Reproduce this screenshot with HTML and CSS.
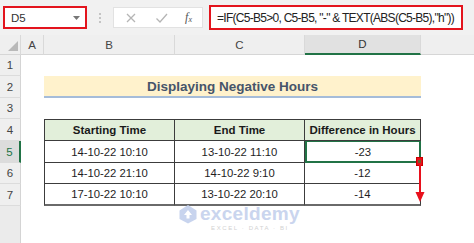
FILE: index.html
```html
<!DOCTYPE html>
<html>
<head>
<meta charset="utf-8">
<link rel="stylesheet" href="styles.css">
</head>
<body>
<div class="app">
  <div class="toolbar">
    <div class="namebox">
      <span class="nb-text">D5</span>
      <svg class="caret" width="7" height="4" viewBox="0 0 7 4"><path d="M0 0h7L3.5 4z" fill="#777"/></svg>
    </div>
    <div class="sep"><i></i><i></i><i></i></div>
    <div class="fxbtns">
      <svg width="12" height="12" viewBox="0 0 12 12"><path d="M2 2l8 8M10 2l-8 8" stroke="#b5b5b5" stroke-width="1.3" fill="none"/></svg>
      <svg width="13" height="12" viewBox="0 0 13 12"><path d="M1.5 6.5l3.5 3.5 7-8" stroke="#b5b5b5" stroke-width="1.3" fill="none"/></svg>
      <span class="fx">f<sub>x</sub></span>
    </div>
    <div class="formula">=IF(C5-B5&gt;0, C5-B5, "-" &amp; TEXT(ABS(C5-B5),"h"))</div>
  </div>

  <div class="sheet">
    <div class="colhead corner"><svg width="10" height="10" viewBox="0 0 10 10"><path d="M10 0V10H0z" fill="#b9b9b9"/></svg></div>
    <div class="colhead">A</div>
    <div class="colhead">B</div>
    <div class="colhead">C</div>
    <div class="colhead sel">D</div>
    <div class="colhead last"></div>

    <div class="rowhead r1">1</div>
    <div class="rowhead r2">2</div>
    <div class="rowhead r3">3</div>
    <div class="rowhead r4">4</div>
    <div class="rowhead r5 sel">5</div>
    <div class="rowhead r6">6</div>
    <div class="rowhead r7">7</div>
    <div class="rowhead r8"></div>

    <div class="title">Displaying Negative Hours</div>

    <div class="cell th r4 cb first">Starting Time</div>
    <div class="cell th r4 cc">End Time</div>
    <div class="cell th r4 cd">Difference in Hours</div>

    <div class="cell r5 cb first">14-10-22 10:10</div>
    <div class="cell r5 cc">13-10-22 11:10</div>
    <div class="cell r5 cd active">-23
      <span class="handle"></span>
      <span class="arrow"><svg width="10" height="38" viewBox="0 0 10 38"><path d="M5 0V30" stroke="#e8101c" stroke-width="2"/><path d="M0.5 27H9.5L5 37z" fill="#e8101c"/></svg></span>
    </div>

    <div class="cell r6 cb first">14-10-22 21:10</div>
    <div class="cell r6 cc">14-10-22 9:10</div>
    <div class="cell r6 cd">-12</div>

    <div class="cell r7 cb first lastrow">17-10-22 10:10</div>
    <div class="cell r7 cc lastrow">13-10-22 20:10</div>
    <div class="cell r7 cd lastrow">-14</div>

    <div class="watermark">
      <svg width="20" height="20" viewBox="0 0 20 20"><path d="M10 1L18.5 6.5V15L10 19.5L1.5 15V6.5z" fill="#c8d4ee"/><path d="M10 6L14 11H11.5V14.5H8.5V11H6z" fill="#ffffff"/></svg>
      <div class="wm-text">
        <span class="wm-name">exceldemy</span>
        <span class="wm-sub">EXCEL · DATA · BI</span>
      </div>
    </div>
  </div>
</div>
</body>
</html>
```
FILE: styles.css
```css
* { box-sizing: border-box; }
html, body { margin: 0; padding: 0; }
body {
  width: 474px;
  height: 243px;
  overflow: hidden;
  background: #ffffff;
  font-family: "Liberation Sans", Arial, sans-serif;
  color: #222;
}
.app { width: 474px; height: 243px; display: flex; flex-direction: column; }

.toolbar {
  height: 35px;
  flex: none;
  background: #f1f1f1;
  display: flex;
  align-items: center;
  padding-left: 3px;
}
.namebox {
  width: 84px;
  height: 23px;
  border: 2px solid #e3141d;
  background: #fff;
  display: flex;
  align-items: center;
  justify-content: space-between;
  padding: 0 5px 0 6px;
  font-size: 11.5px;
  color: #333;
}
.caret { margin-top: 1px; }
.sep {
  width: 26px;
  display: flex;
  flex-direction: column;
  align-items: center;
  gap: 2px;
}
.sep i { width: 2px; height: 2px; background: #c4c4c4; display: block; }
.fxbtns {
  width: 90px;
  height: 21px;
  background: #fff;
  border: 1px solid #e2e2e2;
  display: flex;
  align-items: center;
  justify-content: space-between;
  padding: 0 10px 0 11px;
}
.fx {
  font-family: "Liberation Serif", serif;
  font-style: italic;
  font-size: 12px;
  color: #555;
}
.fx sub { font-size: 8px; vertical-align: -1px; }
.formula {
  margin-left: 6px;
  width: 254px;
  height: 25px;
  border: 2px solid #e3141d;
  background: #fff;
  display: flex;
  align-items: center;
  padding-left: 6px;
  font-size: 12px;
  letter-spacing: -0.72px;
  color: #222;
  white-space: nowrap;
  overflow: hidden;
}

.sheet {
  position: relative;
  flex: 1;
  display: grid;
  grid-template-columns: 21px 23px 131px 130px 116px 1fr;
  grid-template-rows: 20px 21px 22px 21px 22px 22px 21px 22px 1fr;
}
.colhead {
  grid-row: 1;
  background: #efefef;
  border-bottom: 1px solid #d6d6d6;
  border-right: 1px solid #d9d9d9;
  display: flex;
  align-items: center;
  justify-content: center;
  font-size: 11.5px;
  color: #444;
}
.colhead.corner { justify-content: flex-end; align-items: flex-end; padding: 0 2px 3px 0; }
.colhead.sel { background: #e1e1e1; border-bottom: 2px solid #217346; color: #333; }
.colhead.last { border-right: none; }

.rowhead {
  grid-column: 1;
  background: #efefef;
  border-right: 1px solid #d4d4d4;
  border-bottom: 1px solid #dcdcdc;
  display: flex;
  align-items: center;
  justify-content: center;
  font-size: 11.5px;
  color: #444;
}
.rowhead.sel { background: #dcdcdc; border-right: 2px solid #217346; color: #217346; }
.rowhead.r8 { background: #ebebeb; border-bottom: none; }

.r1 { grid-row: 2; }
.r2 { grid-row: 3; }
.r3 { grid-row: 4; }
.r4 { grid-row: 5; }
.r5 { grid-row: 6; }
.r6 { grid-row: 7; }
.r7 { grid-row: 8; }
.r8 { grid-row: 9; }

.title {
  grid-row: 3;
  grid-column: 3 / 6;
  height: 22px;
  background: #fff2cc;
  border-bottom: 2px solid #a5bcd9;
  display: flex;
  align-items: center;
  justify-content: center;
  font-weight: bold;
  font-size: 13.5px;
  color: #46546a;
}

.cb { grid-column: 3; }
.cc { grid-column: 4; }
.cd { grid-column: 5; }

.cell {
  display: flex;
  align-items: center;
  justify-content: center;
  font-size: 11.3px;
  color: #1e1e1e;
  border-right: 1px solid #3c3c3c;
  border-bottom: 1px solid #3c3c3c;
}
.cell.first { border-left: 1px solid #3c3c3c; }
.cell.th {
  background: #e2efda;
  border-top: 1px solid #3c3c3c;
  font-weight: bold;
  font-size: 11.5px;
  color: #1a1a1a;
}
.cell.lastrow { border-bottom: 2px solid #6a6a6a; }
.cell.active {
  position: relative;
  box-shadow: inset 0 0 0 1px #217346;
  border-left: 1px solid #217346;
  border-right: 1px solid #217346;
  border-bottom: 1px solid #217346;
}
.handle {
  position: absolute;
  right: -3px;
  bottom: -4px;
  width: 7px;
  height: 9px;
  background: #e8101c;
  border: 1px solid #c00;
}
.handle::after {
  content: "";
  position: absolute;
  left: 1px;
  top: 2px;
  width: 3px;
  height: 3px;
  background: #7a5a2a;
}
.arrow {
  position: absolute;
  right: -5px;
  top: 24px;
  display: block;
  line-height: 0;
}

.watermark {
  position: absolute;
  left: 178px;
  top: 169px;
  display: flex;
  align-items: flex-start;
  gap: 2px;
}
.wm-text { display: flex; flex-direction: column; align-items: center; }
.wm-name {
  font-family: "Liberation Sans", Arial, sans-serif;
  font-weight: bold;
  font-size: 19px;
  line-height: 20px;
  color: #cad5ee;
  letter-spacing: 0.3px;
}
.wm-sub {
  font-size: 6px;
  letter-spacing: 1.6px;
  color: #d2d2d2;
  line-height: 8px;
}
```
